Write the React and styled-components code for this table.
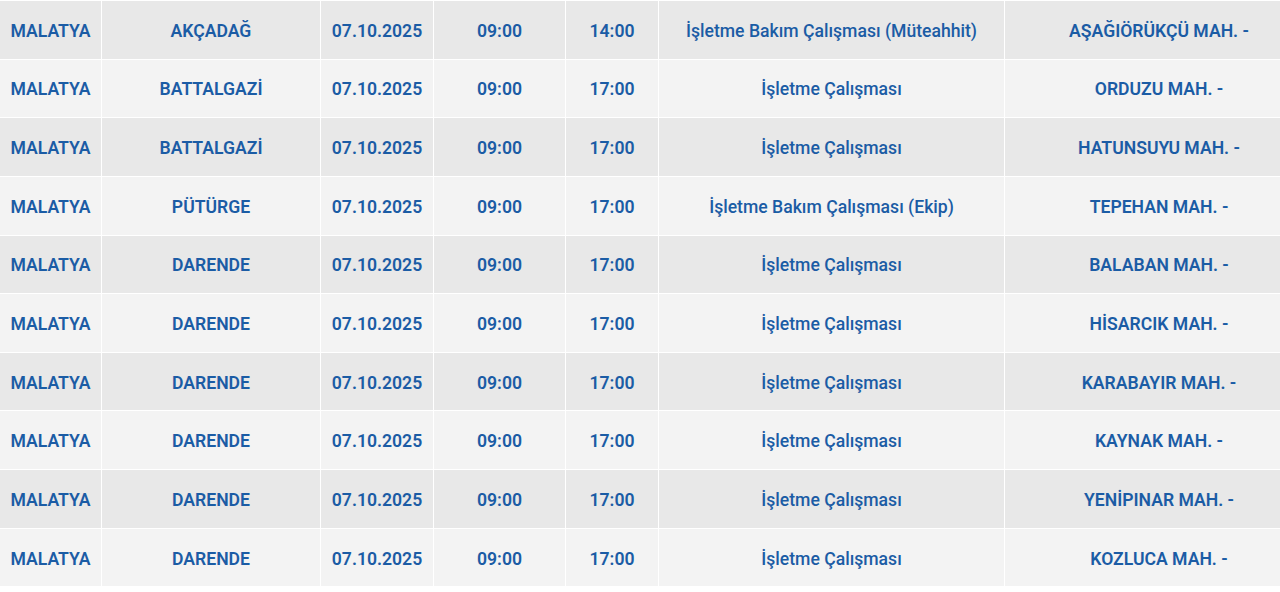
import React from 'react';
import styled, { createGlobalStyle } from 'styled-components';

const GlobalStyle = createGlobalStyle`
  html, body {
    margin: 0;
    padding: 0;
    background: #ffffff;
    overflow: hidden;
  }
`;

const rows = [
  ['AKÇADAĞ', '14:00', 'İşletme Bakım Çalışması (Müteahhit)', 'AŞAĞIÖRÜKÇÜ MAH. -'],
  ['BATTALGAZİ', '17:00', 'İşletme Çalışması', 'ORDUZU MAH. -'],
  ['BATTALGAZİ', '17:00', 'İşletme Çalışması', 'HATUNSUYU MAH. -'],
  ['PÜTÜRGE', '17:00', 'İşletme Bakım Çalışması (Ekip)', 'TEPEHAN MAH. -'],
  ['DARENDE', '17:00', 'İşletme Çalışması', 'BALABAN MAH. -'],
  ['DARENDE', '17:00', 'İşletme Çalışması', 'HİSARCIK MAH. -'],
  ['DARENDE', '17:00', 'İşletme Çalışması', 'KARABAYIR MAH. -'],
  ['DARENDE', '17:00', 'İşletme Çalışması', 'KAYNAK MAH. -'],
  ['DARENDE', '17:00', 'İşletme Çalışması', 'YENİPINAR MAH. -'],
  ['DARENDE', '17:00', 'İşletme Çalışması', 'KOZLUCA MAH. -'],
];

const Table = styled.div`
  display: flex;
  flex-direction: column;
  gap: 1px;
  padding-top: 1px;
  width: 1320px;
  font-family: Roboto, "Noto Sans", sans-serif;
`;

const Row = styled.div`
  display: grid;
  grid-template-columns: 101px 218px 112px 131px 92px 345px 308px;
  column-gap: 1px;
  height: 57.65px;
`;

const Cell = styled.div`
  display: flex;
  align-items: center;
  justify-content: center;
  padding-top: 2px;
  box-sizing: border-box;
  background: ${(p) => (p.$odd ? '#e8e8e8' : '#f3f3f3')};
  color: #1b5ca5;
  font-size: 17.6px;
  font-weight: ${(p) => (p.$light ? 500 : 600)};
  white-space: nowrap;
`;

const App = () => (
  <>
    <GlobalStyle />
    <Table>
      {rows.map(([ilce, end, tip, mah], i) => {
        const odd = i % 2 === 0;
        return (
          <Row key={i}>
            <Cell $odd={odd}>MALATYA</Cell>
            <Cell $odd={odd}>{ilce}</Cell>
            <Cell $odd={odd}>07.10.2025</Cell>
            <Cell $odd={odd}>09:00</Cell>
            <Cell $odd={odd}>{end}</Cell>
            <Cell $odd={odd} $light>{tip}</Cell>
            <Cell $odd={odd}>{mah}</Cell>
          </Row>
        );
      })}
    </Table>
  </>
);

export default App;
